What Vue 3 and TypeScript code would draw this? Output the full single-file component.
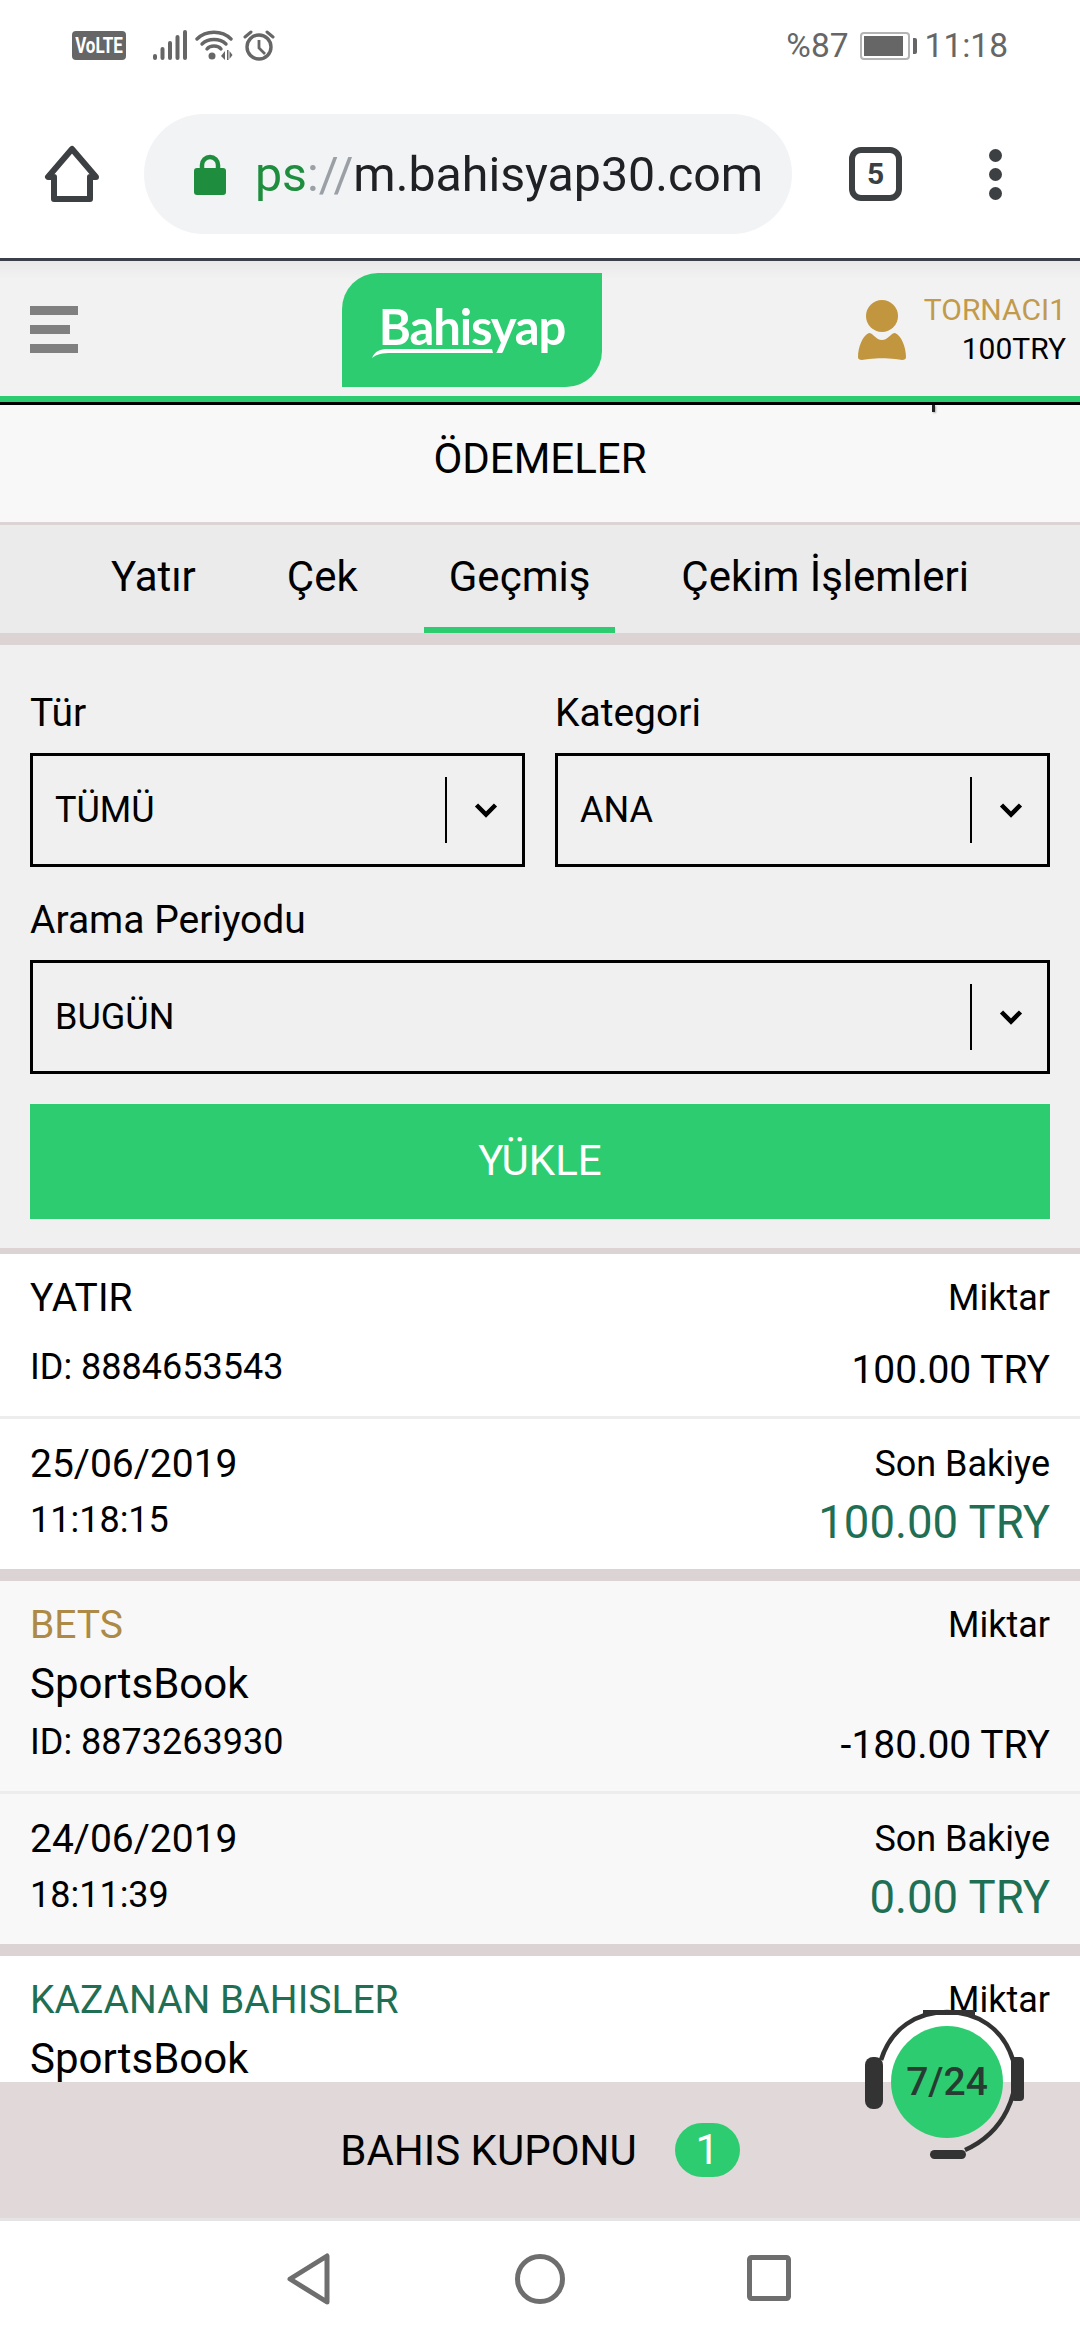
<script setup lang="ts">
interface Tx {
  title: string;
  titleClass?: string;
  sub?: string;
  id?: string;
  amount?: string;
  date?: string;
  time?: string;
  balance?: string;
  alt?: boolean;
}

const tabs = ['Yatır', 'Çek', 'Geçmiş', 'Çekim İşlemleri'];
const activeTab = 'Geçmiş';

const transactions: Tx[] = [
  {
    title: 'YATIR',
    id: 'ID: 8884653543',
    amount: '100.00 TRY',
    date: '25/06/2019',
    time: '11:18:15',
    balance: '100.00 TRY',
  },
  {
    title: 'BETS',
    titleClass: 'gold',
    sub: 'SportsBook',
    id: 'ID: 8873263930',
    amount: '-180.00 TRY',
    date: '24/06/2019',
    time: '18:11:39',
    balance: '0.00 TRY',
    alt: true,
  },
  {
    title: 'KAZANAN BAHISLER',
    titleClass: 'green',
    sub: 'SportsBook',
  },
];
</script>

<template>
  <div class="screen">
    <!-- android status bar -->
    <div class="status">
      <div class="status-left">
        <span class="volte"><span class="volte-text">VoLTE</span></span>
        <svg class="sig" width="34" height="30" viewBox="0 0 34 30">
          <g fill="#666">
            <rect x="0" y="24" width="4" height="6" rx="2" />
            <rect x="7.5" y="17" width="4" height="13" rx="2" />
            <rect x="15" y="11" width="4" height="19" rx="2" />
            <rect x="22.5" y="5" width="4" height="25" rx="2" />
            <rect x="30" y="0" width="4" height="30" rx="2" />
          </g>
        </svg>
        <svg class="wifi" width="38" height="30" viewBox="0 0 38 30">
          <g fill="none" stroke="#666" stroke-width="3.4" stroke-linecap="round">
            <path d="M2 9 C11 0 27 0 36 9" />
            <path d="M7 14 C13 8 25 8 31 14" />
            <path d="M12 19 C15 15 23 15 26 19" />
          </g>
          <circle cx="17" cy="26" r="3.5" fill="#666" />
          <path d="M26 26l4-5v9zM32 20h1.5v10H32zM34.500 21l3 4-3 4z" fill="#666" />
        </svg>
        <svg class="alarm" width="32" height="31" viewBox="0 0 32 31">
          <circle cx="16" cy="17" r="12" fill="none" stroke="#666" stroke-width="3.4" />
          <path d="M16 10v8l6 6" fill="none" stroke="#666" stroke-width="2.8" />
          <path d="M2 7l6-5M30 7l-6-5" stroke="#666" stroke-width="3" stroke-linecap="round" />
        </svg>
      </div>
      <div class="status-right">
        <span>%87</span>
        <span class="battery"><i class="battery-fill"></i></span>
        <span class="clock">11:18</span>
      </div>
    </div>

    <!-- browser toolbar -->
    <div class="toolbar">
      <svg class="home" width="56" height="58" viewBox="0 0 56 58">
        <path d="M28 4 L4 32 H10 V54 H46 V32 H52 Z" fill="none" stroke="#3c4043" stroke-width="6" stroke-linejoin="round" />
      </svg>
      <div class="address">
        <svg class="lock" width="32" height="41" viewBox="0 0 32 41">
          <path d="M8 18 V11 a8 8 0 0 1 16 0 V18" fill="none" stroke="#1e8e3e" stroke-width="4.500" />
          <rect x="0" y="14" width="32" height="27" rx="3" fill="#1e8e3e" />
        </svg>
        <span class="url"><span class="url-scheme">ps</span><span class="url-sep">://</span>m.bahisyap30.com</span>
      </div>
      <span class="tabs-count">5</span>
      <div class="dots"><i></i><i></i><i></i></div>
    </div>

    <!-- site header -->
    <header class="site-header">
      <div class="burger"><i></i><i class="short"></i><i></i></div>
      <div class="logo">
        <span class="logo-text">Bahisyap</span>
        <svg class="swoosh" width="122" height="13" viewBox="0 0 122 13">
          <path d="M0 12 C3 5 8 3 16 3 H120 L121 7 H20 C10 7 5 8 0 12 Z" fill="#fff" />
        </svg>
      </div>
      <div class="user">
        <svg class="user-icon" width="50" height="60" viewBox="0 0 50 60">
          <circle cx="25" cy="16" r="16" fill="#c1963f" />
          <path d="M12 33 C16 33 19 40 25 40 C31 40 34 33 38 33 C44 35 49 47 49 57 C49 61 44 60 38 59 C30 58 20 58 12 59 C6 60 1 61 1 57 C1 47 6 35 12 33 Z" fill="#c1963f" />
        </svg>
        <div class="user-text">
          <span class="user-name">TORNACI1</span>
          <span class="user-bal">100TRY</span>
        </div>
      </div>
    </header>

    <main class="content">
      <i class="tick"></i>
      <div class="page-title">ÖDEMELER</div>
      <nav class="tabs">
        <span v-for="t in tabs" :key="t" class="tab" :class="{ active: t === activeTab }">{{ t }}</span>
      </nav>

      <section class="form">
        <div class="form-row">
          <div class="field">
            <label>Tür</label>
            <div class="select">
              <span class="select-val">TÜMÜ</span>
              <span class="select-arrow">
                <svg width="24" height="16" viewBox="0 0 24 16"><path d="M2.500 3 L12 12.500 L21.500 3" fill="none" stroke="#000" stroke-width="4.500" /></svg>
              </span>
            </div>
          </div>
          <div class="field">
            <label>Kategori</label>
            <div class="select">
              <span class="select-val">ANA</span>
              <span class="select-arrow">
                <svg width="24" height="16" viewBox="0 0 24 16"><path d="M2.500 3 L12 12.500 L21.500 3" fill="none" stroke="#000" stroke-width="4.500" /></svg>
              </span>
            </div>
          </div>
        </div>
        <div class="field">
          <label>Arama Periyodu</label>
          <div class="select">
            <span class="select-val">BUGÜN</span>
            <span class="select-arrow">
              <svg width="24" height="16" viewBox="0 0 24 16"><path d="M2.500 3 L12 12.500 L21.500 3" fill="none" stroke="#000" stroke-width="4.500" /></svg>
            </span>
          </div>
        </div>
        <button class="load-btn">YÜKLE</button>
      </section>

      <article v-for="tx in transactions" :key="tx.title" class="tx" :class="{ alt: tx.alt }">
        <div class="tx-top">
          <div class="col">
            <div class="tx-title" :class="tx.titleClass">{{ tx.title }}</div>
            <div v-if="tx.sub" class="tx-sub">{{ tx.sub }}</div>
            <div v-if="tx.id" class="tx-id" :class="{ spaced: !tx.sub }">{{ tx.id }}</div>
          </div>
          <div class="col right">
            <div class="tx-label">Miktar</div>
            <div v-if="tx.amount" class="tx-amount">{{ tx.amount }}</div>
          </div>
        </div>
        <div v-if="tx.date" class="tx-bottom">
          <div class="col">
            <div class="tx-date">{{ tx.date }}</div>
            <div class="tx-line">{{ tx.time }}</div>
          </div>
          <div class="col right">
            <div class="tx-line">Son Bakiye</div>
            <div class="tx-balance">{{ tx.balance }}</div>
          </div>
        </div>
      </article>
    </main>

    <footer class="slip">
      <span>BAHIS KUPONU</span>
      <span class="slip-badge">1</span>
    </footer>

    <div class="nav-bar">
      <svg width="46" height="54" viewBox="0 0 46 54">
        <path d="M41 4 V50 L4 27 Z" fill="none" stroke="#6e6e6e" stroke-width="5" stroke-linejoin="round" />
      </svg>
      <svg width="50" height="50" viewBox="0 0 50 50">
        <circle cx="25" cy="25" r="22.500" fill="none" stroke="#6e6e6e" stroke-width="5" />
      </svg>
      <svg width="44" height="46" viewBox="0 0 44 46">
        <rect x="2.500" y="2.500" width="39" height="41" rx="2" fill="none" stroke="#6e6e6e" stroke-width="5" />
      </svg>
    </div>

    <!-- live support widget -->
    <div class="support">
      <svg width="170" height="160" viewBox="0 0 170 160">
        <circle cx="82" cy="82" r="56" fill="#2ecc71" />
        <path d="M16 60 C26 28 52 12 82 12 C112 12 138 28 148 60 C156 92 140 132 100 150" fill="none" stroke="#333" stroke-width="4.500" />
        <rect x="58" y="10" width="52" height="5" fill="#333" />
        <rect x="0" y="57" width="18" height="52" rx="8" fill="#333" />
        <rect x="146" y="57" width="13" height="44" rx="4" fill="#333" />
        <rect x="65" y="150" width="36" height="9" rx="4.500" fill="#333" />
      </svg>
      <span class="support-text">7/24</span>
    </div>
  </div>
</template>

<style>
html,
body {
  margin: 0;
  background: #fff;
}
</style>

<style scoped>
.screen {
  position: relative;
  width: 1080px;
  height: 2340px;
  display: flex;
  flex-direction: column;
  overflow: hidden;
  font-family: Roboto, "Noto Sans", sans-serif;
  color: #000;
  background: #fff;
}

.status {
  height: 90px;
  padding: 30px 72px 0;
  box-sizing: border-box;
  display: flex;
  justify-content: space-between;
  align-items: flex-start;
  flex: none;
}
.status-left {
  display: flex;
  align-items: flex-start;
}
.volte {
  width: 54px;
  height: 29px;
  margin-top: 1px;
  background: #666;
  border-radius: 4px;
  color: #fff;
  font: 700 17px/29px Roboto, sans-serif;
  text-align: center;
}
.volte-text {
  display: inline-block;
  transform: scaleY(1.35);
}
.sig {
  margin-left: 27px;
}
.wifi {
  margin-left: 8px;
}
.alarm {
  margin-left: 10px;
}
.status-right {
  display: flex;
  align-items: center;
  color: #666;
  font-size: 33.5px;
  line-height: 31px;
}
.battery {
  position: relative;
  width: 50px;
  height: 28px;
  margin: 0 15px 0 11px;
  padding: 2px;
  border: 2px solid #b4b4b4;
  border-radius: 4px;
  box-sizing: border-box;
  display: block;
}
.battery::after {
  content: '';
  position: absolute;
  right: -9px;
  top: 4px;
  width: 4px;
  height: 16px;
  background: #666;
  border-radius: 0 2px 2px 0;
}
.battery-fill {
  display: block;
  height: 100%;
  width: 94%;
  background: #666;
}

.toolbar {
  height: 171px;
  flex: none;
  box-sizing: border-box;
  display: flex;
  align-items: center;
  border-bottom: 3px solid #3a3f4a;
  padding-left: 44px;
}
.home {
  flex: none;
}
.address {
  margin-left: 44px;
  width: 648px;
  height: 120px;
  border-radius: 60px;
  background: #f1f3f4;
  display: flex;
  align-items: center;
  padding-left: 50px;
  box-sizing: border-box;
  overflow: hidden;
  flex: none;
}
.lock {
  flex: none;
}
.url {
  margin-left: 29px;
  font-size: 48.3px;
  color: #202124;
  white-space: nowrap;
}
.url-scheme {
  color: #1e8e3e;
}
.url-sep {
  color: #9aa0a6;
}
.tabs-count {
  margin-left: 57px;
  width: 53px;
  height: 54px;
  box-sizing: border-box;
  border: 6px solid #3c4043;
  border-radius: 12px;
  color: #3c4043;
  font-size: 30px;
  font-weight: 700;
  text-align: center;
  line-height: 42px;
  flex: none;
}
.dots {
  margin-left: 87px;
  display: flex;
  flex-direction: column;
  gap: 6px;
  flex: none;
}
.dots i {
  width: 13px;
  height: 13px;
  border-radius: 50%;
  background: #3c4043;
}

.site-header {
  height: 141px;
  flex: none;
  box-sizing: border-box;
  background: linear-gradient(#e9e9e9, #f2f2f2 18px);
  border-bottom: 6px solid #2ecc71;
  display: flex;
  align-items: flex-start;
  position: relative;
  box-shadow: 0 3px 0 #000;
  z-index: 2;
}
.burger {
  margin: 45px 0 0 30px;
  width: 48px;
  display: flex;
  flex-direction: column;
  gap: 10px;
}
.burger i {
  height: 9px;
  background: #808080;
}
.burger i.short {
  width: 40px;
}
.logo {
  position: relative;
  margin: 12px 0 0 264px;
  width: 260px;
  height: 114px;
  background: #2ecc71;
  border-radius: 36px 0 36px 0;
  flex: none;
  text-align: center;
}
.logo-text {
  display: block;
  margin-top: 24px;
  color: #fff;
  font: 700 49px/58px Lato, "Open Sans", sans-serif;
  letter-spacing: -1.2px;
}
.swoosh {
  position: absolute;
  left: 30px;
  top: 73px;
}
.user {
  position: absolute;
  right: 14px;
  top: 29px;
  display: flex;
}
.user-icon {
  margin-top: 10px;
  margin-right: 17px;
}
.user-text {
  display: flex;
  flex-direction: column;
  align-items: flex-end;
  font-size: 30px;
  line-height: 39px;
}
.user-name {
  color: #c29a4c;
}

.content {
  position: relative;
  flex: 1;
  min-height: 0;
  overflow: hidden;
  margin-top: 3px;
}
.tick {
  position: absolute;
  left: 932px;
  top: 0;
  width: 3px;
  height: 7px;
  background: #222;
  box-shadow: 1px 1px 2px rgba(0, 0, 0, 0.3);
}
.page-title {
  height: 117px;
  background: #f8f8f8;
  border-bottom: 3px solid #dcd3d5;
  font-size: 42px;
  line-height: 108px;
  text-align: center;
}
.tabs {
  height: 108px;
  background: #ebebeb;
  display: flex;
  justify-content: center;
  gap: 41px;
  box-sizing: border-box;
  padding-top: 6px;
}
.tab {
  height: 102px;
  padding: 0 25px;
  box-sizing: border-box;
  font-size: 42px;
  line-height: 92px;
}
.tab.active {
  border-bottom: 6px solid #2ecc71;
}
.form {
  border-top: 12px solid #dcd3d5;
  border-bottom: 6px solid #dcd3d5;
  background: #f0f0f0;
  padding: 40px 30px 29px;
}
.form-row {
  display: flex;
  gap: 30px;
  margin-bottom: 25px;
}
.field {
  flex: 1;
  min-width: 0;
}
.field label {
  display: block;
  font-size: 39px;
  line-height: 56px;
  margin-bottom: 12px;
}
.select {
  height: 114px;
  box-sizing: border-box;
  border: 3px solid #000;
  display: flex;
  align-items: center;
  padding-left: 22px;
  font-size: 36px;
}
.select-val {
  flex: 1;
}
.select-arrow {
  width: 77px;
  height: 66px;
  box-sizing: border-box;
  border-left: 2px solid #000;
  display: flex;
  align-items: center;
  padding-left: 27px;
  flex: none;
}
.load-btn {
  display: block;
  width: 100%;
  height: 115px;
  margin-top: 30px;
  border: 0;
  background: #2ecc71;
  color: #fff;
  font-family: inherit;
  font-size: 42px;
  padding: 0 0 3px;
}

.tx {
  background: #fff;
  border-bottom: 12px solid #dcd3d5;
}
.tx.alt {
  background: #f8f8f8;
}
.tx-top,
.tx-bottom {
  display: flex;
  justify-content: space-between;
  padding: 0 30px;
}
.tx-top {
  padding-top: 15px;
  padding-bottom: 18px;
}
.tx-bottom {
  border-top: 3px solid #ededed;
  padding-top: 17px;
  padding-bottom: 21px;
}
.col {
  display: flex;
  flex-direction: column;
}
.col.right {
  align-items: flex-end;
  justify-content: space-between;
}
.tx-title {
  font-size: 39px;
  line-height: 58px;
}
.tx-title.gold {
  color: #ad8a45;
}
.tx-title.green {
  color: #1f6f54;
}
.tx-sub {
  font-size: 42px;
  line-height: 60px;
}
.tx-id {
  font-size: 36px;
  line-height: 56px;
  margin-bottom: 3px;
}
.tx-id.spaced {
  margin-top: 12px;
}
.tx-label {
  font-size: 36px;
  line-height: 58px;
}
.tx-amount {
  font-size: 39px;
  line-height: 56px;
}
.tx-date {
  font-size: 39px;
  line-height: 56px;
}
.tx-line {
  font-size: 36px;
  line-height: 56px;
}
.tx-balance {
  font-size: 45.5px;
  line-height: 62px;
  margin-bottom: -6px;
  color: #1f6f54;
}

.slip {
  height: 139px;
  flex: none;
  box-sizing: border-box;
  background: #e0d8d9;
  border-bottom: 3px solid #e4e4e4;
  display: flex;
  align-items: center;
  justify-content: center;
  font-size: 42px;
  gap: 38px;
}
.slip-badge {
  width: 65px;
  height: 54px;
  border-radius: 27px;
  background: #2ecc71;
  color: #fff;
  text-align: center;
  line-height: 54px;
}

.nav-bar {
  height: 119px;
  flex: none;
  background: #fff;
  position: relative;
}
.nav-bar svg {
  position: absolute;
  top: 31px;
}
.nav-bar svg:nth-child(1) {
  left: 286px;
}
.nav-bar svg:nth-child(2) {
  left: 515px;
  top: 33px;
}
.nav-bar svg:nth-child(3) {
  left: 747px;
  top: 34px;
}

.support {
  position: absolute;
  left: 865px;
  top: 2000px;
  width: 170px;
  height: 160px;
}
.support-text {
  position: absolute;
  left: 22px;
  top: 60px;
  width: 120px;
  text-align: center;
  font-size: 39px;
  line-height: 44px;
  font-weight: 500;
  color: #263c32;
}
</style>
